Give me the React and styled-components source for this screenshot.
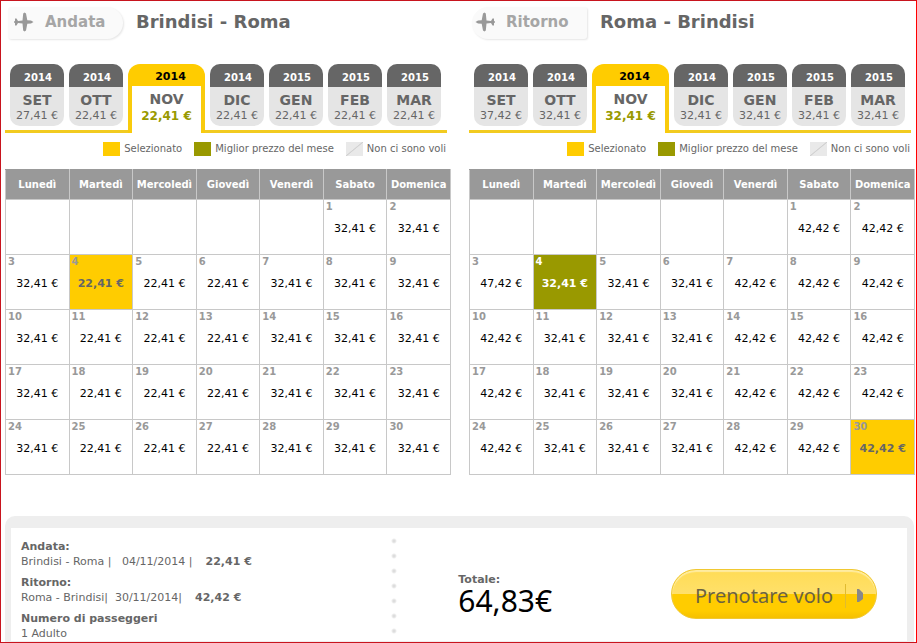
import { useState } from "react";
import styled, { createGlobalStyle } from "styled-components";

const GlobalStyle = createGlobalStyle`
  *, *::before, *::after {
    box-sizing: border-box;
  }

  body {
    margin: 0;
    background: #fff;
    color: #666;
    font-family: "DejaVu Sans", Verdana, sans-serif;
    font-size: 11px;
    line-height: 15px;
  }

  button {
    font-family: inherit;
    cursor: pointer;
  }
`;

const Page = styled.div`
  min-height: 100vh;
  display: flex;
  flex-direction: column;
  padding: 6px 1px 0 4px;
  border: 1px solid #c8141e;
  border-right-color: #f00;
`;

const Flights = styled.main`
  display: grid;
  grid-template-columns: 1fr 1fr;
  gap: 18px;
`;

const Heading = styled.header`
  display: flex;
  align-items: flex-start;
  height: 32px;
  padding-left: 3px;
  margin-bottom: 25px;
`;

const Badge = styled.div`
  display: flex;
  align-items: center;
  gap: 11px;
  width: 115px;
  height: 32px;
  padding: 0 0 2px ${(props) => (props.$back ? "3px" : "6px")};
  margin-right: 13px;
  color: #a6a6a6;
  font-size: 15px;
  font-weight: bold;
  line-height: 30px;
  background: #fafafa;
  border-radius: ${(props) => (props.$back ? "16px 3px 3px 16px" : "3px 16px 16px 3px")};
  box-shadow: 1px 1px 2px #e6e6e6;
`;

const Route = styled.h2`
  margin: 0;
  color: #666;
  font-size: 18px;
  font-weight: bold;
  line-height: 30px;
`;

const Months = styled.div`
  display: flex;
  align-items: flex-start;
  gap: 5px;
  height: 69px;
  padding: 0 6px 0 5px;
  margin-right: 4px;
  border-bottom: 3px solid #f2cb20;
`;

const MonthTab = styled.button`
  flex: ${(props) => (props.$active ? "77 1 0" : "54 1 0")};
  min-width: 0;
  height: ${(props) => (props.$active ? "69px" : "62px")};
  padding: 0;
  overflow: hidden;
  border: 0;
  border-radius: ${(props) => (props.$active ? "12px 12px 0 0" : "10px")};
  background: ${(props) => (props.$active ? "#fff" : "#e5e5e5")};
  color: #666;
  text-align: center;
`;

const Year = styled.span`
  display: block;
  height: ${(props) => (props.$active ? "22px" : "23px")};
  padding-left: ${(props) => (props.$active ? "8px" : "2px")};
  background: ${(props) => (props.$active ? "#fc0" : "#666")};
  color: ${(props) => (props.$active ? "#000" : "#fff")};
  font-size: ${(props) => (props.$active ? "11px" : "10px")};
  font-weight: bold;
  line-height: ${(props) => (props.$active ? "25px" : "27px")};
`;

const MonthBody = styled.span`
  display: flex;
  flex-direction: column;
  height: ${(props) => (props.$active ? "47px" : "39px")};
  padding-top: 5px;
  border: solid #f9cb0c;
  border-width: ${(props) => (props.$active ? "0 4px" : "0")};
`;

const MonthName = styled.strong`
  font-size: 14px;
  line-height: 16px;
`;

const MonthPrice = styled.span`
  color: ${(props) => (props.$active ? "#990" : "#666")};
  font-size: ${(props) => (props.$active ? "12px" : "11px")};
  font-weight: ${(props) => (props.$active ? "bold" : "normal")};
  line-height: ${(props) => (props.$active ? "18px" : "15px")};
  white-space: nowrap;
`;

const Legend = styled.ul`
  display: flex;
  justify-content: flex-end;
  gap: 12px;
  margin: 9px 5px 13px 0;
  padding: 0;
  list-style: none;
  font-size: 10px;
  line-height: 14px;
  white-space: nowrap;
`;

const LegendItem = styled.li`
  display: flex;
  gap: 4px;
`;

const Swatch = styled.span`
  width: 17px;
  height: 14px;
  background: ${(props) => props.$fill};
`;

const Calendar = styled.table`
  width: 100%;
  table-layout: fixed;
  border-collapse: collapse;

  th {
    height: 30px;
    padding: 0;
    border: 1px solid #c8c8c8;
    border-top-color: #999;
    background: #999;
    color: #fff;
    font-size: 10px;
    text-align: center;
  }

  td {
    height: 55px;
    padding: 0;
    border: 1px solid #c8c8c8;
    vertical-align: top;
  }
`;

const dayColors = {
  normal: { back: "#fff", number: "#999", price: "#000" },
  selected: { back: "#fc0", number: "#999", price: "#666" },
  best: { back: "#990", number: "#fff", price: "#fff" },
};

const Day = styled.button`
  display: flex;
  flex-direction: column;
  justify-content: flex-start;
  width: 100%;
  height: 54px;
  padding: 0;
  border: 0;
  background: ${(props) => dayColors[props.$kind].back};
  color: ${(props) => dayColors[props.$kind].price};
  font-size: 11px;
  font-weight: ${(props) => (props.$kind === "normal" ? "normal" : "bold")};
  line-height: 15px;
`;

const DayNumber = styled.span`
  align-self: flex-start;
  padding-left: 2px;
  margin-bottom: 8px;
  color: ${(props) => dayColors[props.$kind].number};
  font-size: 10px;
  font-weight: bold;
  line-height: 13px;
`;

const DayPrice = styled.span`
  align-self: center;
  white-space: nowrap;
`;

const Summary = styled.section`
  flex: 1;
  margin: 41px 1px 0 0;
  padding: 12px 7px 0 6px;
  border-radius: 10px 10px 0 0;
  background: #eee;
`;

const SummaryInner = styled.div`
  display: grid;
  grid-template-columns: 23fr 6px 17fr 206px;
  height: 100%;
  padding: 0 30px 0 10px;
  background: #fff;
`;

const Trips = styled.dl`
  margin: 0;
  padding-top: 11px;

  dt {
    font-weight: bold;
  }

  dd {
    margin: 0 0 6px;
    white-space: pre;
  }

  dd:last-child {
    margin-bottom: 0;
  }
`;

const TripPrice = styled.strong`
  margin-left: 6px;
`;

const Dots = styled.div`
  margin-top: 6px;
  background: radial-gradient(circle at 3px 7px, #ddd 1px, transparent 3px) 0 0 / 6px 15px repeat-y;
`;

const Total = styled.div`
  padding: 44px 0 0 61px;
  font-weight: bold;
`;

const Amount = styled.output`
  display: block;
  color: #000;
  font: 30px/28px "Noto Sans", sans-serif;
`;

const BookButton = styled.button`
  display: flex;
  align-items: center;
  justify-content: space-between;
  height: 50px;
  margin-top: 41px;
  padding: 3px 12px 0 23px;
  border: 1px solid #f0c832;
  border-radius: 25px;
  background: linear-gradient(#ffdc55, #ffe06a 50%, #fc0 51%, #fc0 85%, #f5c000);
  box-shadow: inset 0 2px 1px #ffeca0;
  color: #6b6242;
  font: 20px/28px "Noto Sans", sans-serif;
  white-space: nowrap;
`;

const ButtonArrow = styled.span`
  display: flex;
  align-items: center;
  height: 24px;
  padding-left: 10px;
  border-left: 1px solid #e0bb30;
`;

const months = [
  ["2014", "SET"],
  ["2014", "OTT"],
  ["2014", "NOV"],
  ["2014", "DIC"],
  ["2015", "GEN"],
  ["2015", "FEB"],
  ["2015", "MAR"],
];

const weekdays = ["Lunedì", "Martedì", "Mercoledì", "Giovedì", "Venerdì", "Sabato", "Domenica"];

// Prices are in cents, November 2014 starts on a Saturday
const outbound = {
  months: [2741, 2241, 2241, 2241, 2241, 2241, 2241],
  days: [
    3241, 3241,
    3241, 2241, 2241, 2241, 3241, 3241, 3241,
    3241, 2241, 2241, 2241, 3241, 3241, 3241,
    3241, 2241, 2241, 2241, 3241, 3241, 3241,
    3241, 2241, 2241, 2241, 3241, 3241, 3241,
  ],
};

const inbound = {
  months: [3742, 3241, 3241, 3241, 3241, 3241, 3241],
  days: [
    4242, 4242,
    4742, 3241, 3241, 3241, 4242, 4242, 4242,
    4242, 3241, 3241, 3241, 4242, 4242, 4242,
    4242, 3241, 3241, 3241, 4242, 4242, 4242,
    4242, 3241, 3241, 3241, 4242, 4242, 4242,
  ],
};

const euro = (cents) => (cents / 100).toFixed(2).replace(".", ",");

const pad = (day) => String(day).padStart(2, "0");

function Plane({ back }) {
  return (
    <svg width="20" height="20" viewBox="0 0 20 20" fill="#999" aria-hidden="true">
      <path
        transform={back ? "translate(20 0) scale(-1 1)" : undefined}
        d="M0 9.5 1 9 1 6.5 2.5 6.5 4 9 8.5 8.6 9.2 1.5 10.5 0.5 12 1.5 13.3 8.2 17 8.4 19.5 10 17 11.6 13.3 11.8 12 18.5 10.5 19.5 9.2 18.5 8.5 11.4 4 11 2.5 13.5 1 13.5 1 11 0 10.5Z"
      />
    </svg>
  );
}

function FlightCalendar({ label, route, back, data, best, selected, onSelect }) {
  const [month, setMonth] = useState(2);
  const weeks = [0, 1, 2, 3, 4].map((week) => weekdays.map((_, i) => week * 7 + i - 4));

  const kindOf = (day) => {
    if (day === selected) return "selected";
    return day === best ? "best" : "normal";
  };

  return (
    <section>
      <Heading>
        <Badge $back={back}>
          <Plane back={back} />
          {label}
        </Badge>
        <Route>{route}</Route>
      </Heading>

      <Months>
        {months.map(([year, name], i) => (
          <MonthTab key={name} $active={i === month} onClick={() => setMonth(i)}>
            <Year $active={i === month}>{year}</Year>
            <MonthBody $active={i === month}>
              <MonthName>{name}</MonthName>
              <MonthPrice $active={i === month}>{euro(data.months[i])} €</MonthPrice>
            </MonthBody>
          </MonthTab>
        ))}
      </Months>

      <Legend>
        <LegendItem>
          <Swatch $fill="#fc0" />
          Selezionato
        </LegendItem>
        <LegendItem>
          <Swatch $fill="#990" />
          Miglior prezzo del mese
        </LegendItem>
        <LegendItem>
          <Swatch $fill="linear-gradient(to bottom right, #e9e9e9 46%, #d2d2d2 49%, #d2d2d2 51%, #e9e9e9 54%)" />
          Non ci sono voli
        </LegendItem>
      </Legend>

      <Calendar>
        <thead>
          <tr>
            {weekdays.map((name) => (
              <th key={name} scope="col">{name}</th>
            ))}
          </tr>
        </thead>
        <tbody>
          {weeks.map((week) => (
            <tr key={week[0]}>
              {week.map((day) => (
                <td key={day}>
                  {day > 0 && (
                    <Day $kind={kindOf(day)} onClick={() => onSelect(day)}>
                      <DayNumber $kind={kindOf(day)}>{day}</DayNumber>
                      <DayPrice>{euro(data.days[day - 1])} €</DayPrice>
                    </Day>
                  )}
                </td>
              ))}
            </tr>
          ))}
        </tbody>
      </Calendar>
    </section>
  );
}

function App() {
  const [leave, setLeave] = useState(4);
  const [comeBack, setComeBack] = useState(30);
  const leavePrice = outbound.days[leave - 1];
  const backPrice = inbound.days[comeBack - 1];

  return (
    <Page>
      <GlobalStyle />
      <Flights>
        <FlightCalendar
          label="Andata"
          route="Brindisi - Roma"
          data={outbound}
          selected={leave}
          onSelect={setLeave}
        />
        <FlightCalendar
          back
          label="Ritorno"
          route="Roma - Brindisi"
          data={inbound}
          best={4}
          selected={comeBack}
          onSelect={setComeBack}
        />
      </Flights>

      <Summary>
        <SummaryInner>
          <Trips>
            <dt>Andata:</dt>
            <dd>
              {`Brindisi - Roma |   ${pad(leave)}/11/2014 |  `}
              <TripPrice>{euro(leavePrice)} €</TripPrice>
            </dd>
            <dt>Ritorno:</dt>
            <dd>
              {`Roma - Brindisi|  ${pad(comeBack)}/11/2014|  `}
              <TripPrice>{euro(backPrice)} €</TripPrice>
            </dd>
            <dt>Numero di passeggeri</dt>
            <dd>1 Adulto</dd>
          </Trips>
          <Dots />
          <Total>
            Totale:
            <Amount>{euro(leavePrice + backPrice)}€</Amount>
          </Total>
          <BookButton>
            Prenotare volo
            <ButtonArrow>
              <svg width="8" height="14" viewBox="0 0 8 14" aria-hidden="true">
                <path d="M1 0h2l4 4v6l-4 3H1z" fill="#888" />
              </svg>
            </ButtonArrow>
          </BookButton>
        </SummaryInner>
      </Summary>
    </Page>
  );
}

export default App;
